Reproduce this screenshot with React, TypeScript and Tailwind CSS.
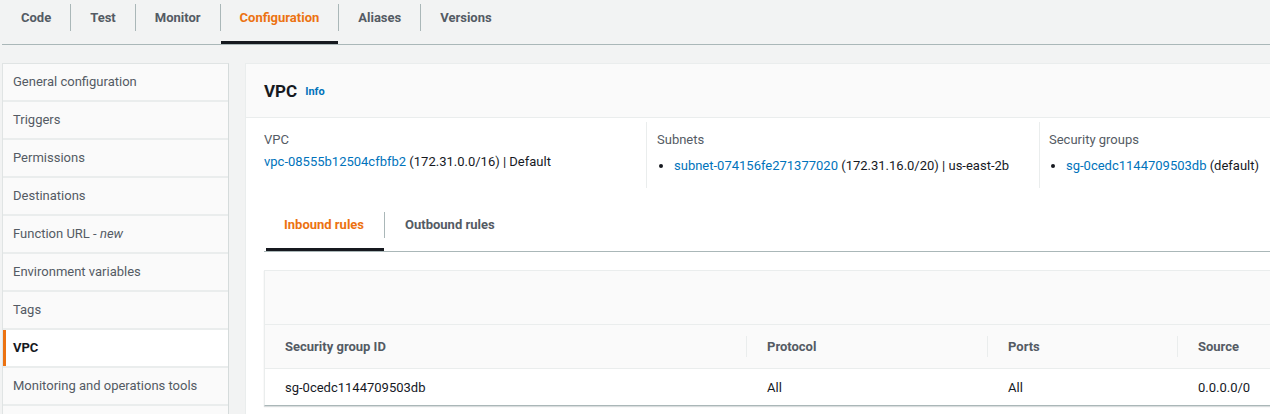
const topTabs = ['Code', 'Test', 'Monitor', 'Configuration', 'Aliases', 'Versions'];

const sideItems = [
  'General configuration',
  'Triggers',
  'Permissions',
  'Destinations',
  'Function URL',
  'Environment variables',
  'Tags',
  'VPC',
  'Monitoring and operations tools',
  '',
];

const columns = [
  { label: 'Security group ID', value: 'sg-0cedc1144709503db', w: 'w-[481px]' },
  { label: 'Protocol', value: 'All', w: 'w-[241px]' },
  { label: 'Ports', value: 'All', w: 'w-[190px]' },
  { label: 'Source', value: '0.0.0.0/0', w: 'w-[200px]' },
];

export default function App() {
  return (
    <div className="w-[1270px] h-[414px] overflow-hidden bg-[#f2f3f3] text-[13px] leading-5 text-[#16191f] font-['Roboto',sans-serif]">
      {/* top tabs */}
      <div className="h-[45px] ml-[2px] flex items-start border-b border-[#aab7b8]">
        {topTabs.map((t, i) => (
          <div key={t} className="flex flex-col h-[44px]">
            <div
              className={`mt-[4px] h-[27px] flex items-center px-[19px] font-bold ${i > 0 ? 'border-l border-[#aab7b8]' : ''} ${
                t === 'Configuration' ? 'text-[#ec7211]' : 'text-[#545b64]'
              }`}
            >
              {t}
            </div>
            <div className={`mt-auto h-[3px] ${t === 'Configuration' ? 'bg-[#16191f] ml-[1px]' : ''}`} />
          </div>
        ))}
      </div>

      <div className="flex items-start mt-[18px]">
        {/* sidebar */}
        <div className="ml-[2px] w-[227px] shrink-0 flex flex-col gap-[2px] bg-[#eaeded] border-x border-t border-[#e0e4e4] border-r-[#d5dbdb]">
          {sideItems.map((s, i) => (
            <div
              key={i}
              className={`h-[36px] flex items-center ${
                s === 'VPC'
                  ? 'bg-white border-l-[3px] border-[#ec7211] pl-[7px] font-bold text-[#16191f]'
                  : 'bg-[#fafafa] pl-[10px] text-[#545b64]'
              }`}
            >
              {s === 'Function URL' ? (
                <span>
                  Function URL - <i>new</i>
                </span>
              ) : (
                s
              )}
            </div>
          ))}
        </div>

        {/* main panel */}
        <div className="ml-[16px] w-[1080px] shrink-0 h-[360px] bg-white border border-[#eaeded]">
          <div className="h-[54px] bg-[#fafafa] border-b border-[#eaeded] flex items-center pl-[18px]">
            <span className="text-[17px] font-bold text-[#16191f]">VPC</span>
            <span className="ml-[8px] mt-[2px] text-[11px] font-bold text-[#0073bb]">Info</span>
          </div>

          <div className="pl-[18px]">
            <div className="mt-[4px] h-[66px] flex">
              <div className="w-[382px] pt-2">
                <div className="text-[#545b64]">VPC</div>
                <div className="mt-[2px]">
                  <span className="text-[#0073bb]">vpc-08555b12504cfbfb2</span> (172.31.0.0/16) | Default
                </div>
              </div>
              <div className="w-[393px] pt-2 pl-[10px] border-l border-[#eaeded]">
                <div className="text-[#545b64]">Subnets</div>
                <ul className="mt-[6px] list-disc pl-[17px]">
                  <li>
                    <span className="text-[#0073bb]">subnet-074156fe271377020</span> (172.31.16.0/20) | us-east-2b
                  </li>
                </ul>
              </div>
              <div className="pt-2 pl-[9px] border-l border-[#eaeded]">
                <div className="text-[#545b64]">Security groups</div>
                <ul className="mt-[6px] list-disc pl-[17px]">
                  <li>
                    <span className="text-[#0073bb]">sg-0cedc1144709503db</span> (default)
                  </li>
                </ul>
              </div>
            </div>

            {/* inner tabs */}
            <div className="mt-[24px] flex items-end border-b border-[#aab7b8]">
              {['Inbound rules', 'Outbound rules'].map((t, i) => (
                <div key={t} className="flex flex-col">
                  <div
                    className={`h-[26px] flex items-center px-5 font-bold ${
                      i === 0 ? 'text-[#ec7211]' : 'text-[#545b64] border-l border-[#aab7b8]'
                    }`}
                  >
                    {t}
                  </div>
                  <div className={`mt-[10px] h-[3px] ${i === 0 ? 'bg-[#16191f] ml-[2px]' : ''}`} />
                </div>
              ))}
            </div>

            {/* table */}
            <div className="mt-[18px] border border-[#eaeded] border-b-[#aab7b8] shadow-[0_1px_1px_rgba(0,28,36,0.15)]">
              <div className="h-[54px] bg-[#fafafa] border-b border-[#eaeded]" />
              <div className="h-[44px] flex items-center bg-[#fafafa] border-b border-[#eaeded]">
                {columns.map((c, i) => (
                  <div
                    key={c.label}
                    className={`${c.w} shrink-0 flex items-center h-[21px] pl-5 font-bold text-[#545b64] ${
                      i > 0 ? 'border-l border-[#eaeded]' : ''
                    }`}
                  >
                    {c.label}
                  </div>
                ))}
              </div>
              <div className="h-[36px] flex items-center pt-px">
                {columns.map((c, i) => (
                  <div key={c.label} className={`${c.w} shrink-0 pl-5 ${i > 0 ? 'border-l border-transparent' : ''}`}>
                    {c.value}
                  </div>
                ))}
              </div>
            </div>
          </div>
        </div>
      </div>
    </div>
  );
}
